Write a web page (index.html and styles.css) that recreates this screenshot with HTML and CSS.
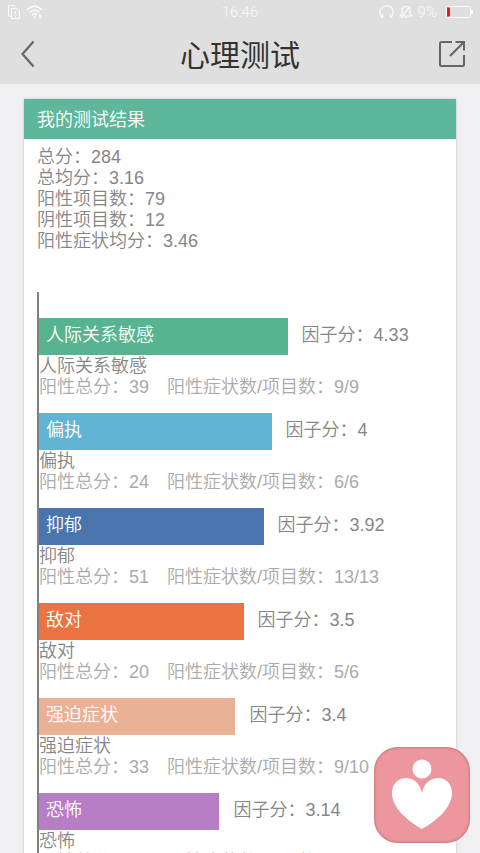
FILE: index.html
```html
<!DOCTYPE html>
<html lang="zh-CN">
<head>
  <meta charset="UTF-8">
  <meta name="viewport" content="width=device-width, initial-scale=1.0">
  <title>心理测试</title>
  <link rel="stylesheet" href="styles.css">
</head>
<body>
  <header class="top">
    <div class="status">
      <div class="status-side">
        <svg width="14" height="16" viewBox="0 0 14 16" fill="none" stroke="currentColor" stroke-width="1">
          <path d="M4 12H1.500V1.500H7.500L9.500 3.500M4.500 4.500H9.500L12.500 7.500V14.500H4.500ZM8.500 7V10M8.500 11.500V13"/>
        </svg>
        <svg width="18" height="16" viewBox="0 0 18 16" fill="none" stroke="currentColor" stroke-width="1.300">
          <path d="M1 6Q8.500 -1.500 16 6M3.500 8.500Q8.500 3.500 13.500 8.500M6 11Q8.500 8.500 11 11"/>
          <circle cx="8.500" cy="13" r="1" fill="currentColor" stroke="none"/>
          <path d="M13 11.500H15.500M13 13.500H15.500"/>
        </svg>
      </div>
      <span class="time">16:46</span>
      <div class="status-side status-right">
        <svg width="15" height="14" viewBox="0 0 15 14" fill="none" stroke="currentColor" stroke-width="1.200">
          <path d="M3 12.500C-1 8 .500 1 7.500 1S16 8 12 12.500M3.500 9.500V13M11.500 9.500V13"/>
        </svg>
        <svg width="14" height="14" viewBox="0 0 14 14" fill="none" stroke="currentColor" stroke-width="1.200">
          <path d="M1 11H13L11 8.500V5.500Q11 1.500 7 1.500T3 5.500V8.500ZM5.500 12.500H8.500M2 13L11 1"/>
        </svg>
        <span>9%</span>
        <svg width="27" height="12" viewBox="0 0 27 12">
          <rect x=".5" y=".5" width="24" height="11" rx="1" fill="none" stroke="currentColor"/>
          <rect x="25" y="4" width="2" height="4" fill="currentColor"/>
          <rect x="1" y="1.500" width="3" height="9" fill="#f01818"/>
        </svg>
      </div>
    </div>
    <nav class="navbar">
      <button class="nav-btn" aria-label="返回">
        <svg width="14" height="28" viewBox="0 0 14 28" fill="none" stroke="currentColor" stroke-width="2.200">
          <path d="M12.500 1.500L1.500 14L12.500 26.500"/>
        </svg>
      </button>
      <h1>心理测试</h1>
      <button class="nav-btn" aria-label="分享">
        <svg width="28" height="28" viewBox="0 0 28 28" fill="none" stroke="currentColor" stroke-width="2">
          <path d="M14 2H3.500Q2 2 2 3.500V24.500Q2 26 3.500 26H24.500Q26 26 26 24.500V15M12 16L26 2M17.500 2H26V10.500"/>
        </svg>
      </button>
    </nav>
  </header>

  <main class="card">
    <h2>我的测试结果</h2>
    <div class="summary">
      <p>总分：284</p>
      <p>总均分：3.16</p>
      <p>阳性项目数：79</p>
      <p>阴性项目数：12</p>
      <p>阳性症状均分：3.46</p>
    </div>

    <div class="chart">
      <section class="factor">
        <div class="row">
          <div class="bar green" style="width: 62%">人际关系敏感</div>
          <span class="score">因子分：4.33</span>
        </div>
        <h3>人际关系敏感</h3>
        <p>阳性总分：39　阳性症状数/项目数：9/9</p>
      </section>
      <section class="factor">
        <div class="row">
          <div class="bar sky" style="width: 58%">偏执</div>
          <span class="score">因子分：4</span>
        </div>
        <h3>偏执</h3>
        <p>阳性总分：24　阳性症状数/项目数：6/6</p>
      </section>
      <section class="factor">
        <div class="row">
          <div class="bar blue" style="width: 56%">抑郁</div>
          <span class="score">因子分：3.92</span>
        </div>
        <h3>抑郁</h3>
        <p>阳性总分：51　阳性症状数/项目数：13/13</p>
      </section>
      <section class="factor">
        <div class="row">
          <div class="bar orange" style="width: 51%">敌对</div>
          <span class="score">因子分：3.5</span>
        </div>
        <h3>敌对</h3>
        <p>阳性总分：20　阳性症状数/项目数：5/6</p>
      </section>
      <section class="factor">
        <div class="row">
          <div class="bar peach" style="width: 49%">强迫症状</div>
          <span class="score">因子分：3.4</span>
        </div>
        <h3>强迫症状</h3>
        <p>阳性总分：33　阳性症状数/项目数：9/10</p>
      </section>
      <section class="factor">
        <div class="row">
          <div class="bar purple" style="width: 45%">恐怖</div>
          <span class="score">因子分：3.14</span>
        </div>
        <h3>恐怖</h3>
        <p>阳性总分：22　阳性症状数/项目数：7/7</p>
      </section>
    </div>
  </main>

  <!-- Floating button -->
  <button class="float-btn" aria-label="心理咨询">
    <svg width="62" height="72" viewBox="0 0 62 72" fill="#fff">
      <circle cx="31" cy="10" r="9.500"/>
      <path d="M31 34C29 24 22 19 15 19C6 19 1 26 1 34C1 48 15 61 31 70C47 61 61 48 61 34C61 26 56 19 47 19C40 19 33 24 31 34Z"/>
    </svg>
  </button>
</body>
</html>
```
FILE: styles.css
```css
* {
  box-sizing: border-box;
}

body {
  margin: 0;
  background-color: #f0f0f2;
  color: #868686;
  font-family: "Liberation Sans", "Noto Sans CJK SC", sans-serif;
  font-size: 18px;
  font-weight: 350;
  line-height: 21px;
}

h1, h2, h3, p {
  margin: 0;
  font-weight: 350;
}

h2, h3 {
  font-size: 18px;
}

button {
  padding: 0;
  border: none;
  background: none;
  cursor: pointer;
}

svg {
  display: block;
}

/* Header */
.top {
  position: sticky;
  top: 0;
  z-index: 1;
  height: 84px;
  background-color: #dfdfdf;
}

.status {
  display: flex;
  align-items: center;
  height: 24px;
  padding: 0 7px;
  color: #fafafa;
  font-family: Roboto, sans-serif;
  font-size: 15px;
}

.status-side {
  display: flex;
  flex: 1;
  align-items: center;
  gap: 5px;
}

.status-right {
  justify-content: flex-end;
}

.status-right span {
  margin-right: 4px;
}

.navbar {
  display: flex;
  align-items: center;
  justify-content: space-between;
  height: 60px;
  padding: 0 14px;
}

.navbar h1 {
  padding-top: 4px;
  color: #333;
  font-size: 30px;
  font-weight: 400;
  line-height: 36px;
}

.nav-btn {
  display: flex;
  justify-content: center;
  width: 28px;
  color: #666;
}

/* Result card */
.card {
  margin: 15px 24px;
  background-color: #fff;
  box-shadow: 0 0 3px rgba(0, 0, 0, 0.2);
}

.card h2 {
  padding: 11px 13px 8px;
  background-color: #5eb79b;
  color: #fff;
}

.summary {
  padding: 8px 13px 0;
}

.chart {
  margin: 40px 16px 0 13px;
  padding-top: 26px;
  border-left: 2px solid #808080;
}

.factor {
  padding-bottom: 15px;
}

.factor h3 {
  padding-top: 1px;
}

.factor p {
  color: #aaa;
}

.row {
  display: flex;
}

.bar {
  height: 37px;
  padding: 7px;
  color: #fff;
}

.score {
  padding: 7px 14px;
  white-space: nowrap;
}

.green {
  background-color: #58b490;
}

.sky {
  background-color: #61b4d3;
}

.blue {
  background-color: #4a74ad;
}

.orange {
  background-color: #eb733f;
}

.peach {
  background-color: #e9b297;
}

.purple {
  background-color: #b77dc5;
}

.float-btn {
  position: fixed;
  right: 10px;
  bottom: 10px;
  z-index: 2;
  display: flex;
  align-items: center;
  justify-content: center;
  width: 96px;
  height: 96px;
  border-radius: 24px;
  background-color: #ec979d;
  box-shadow: inset 0 0 3px rgba(90, 30, 40, 0.5);
}
```
